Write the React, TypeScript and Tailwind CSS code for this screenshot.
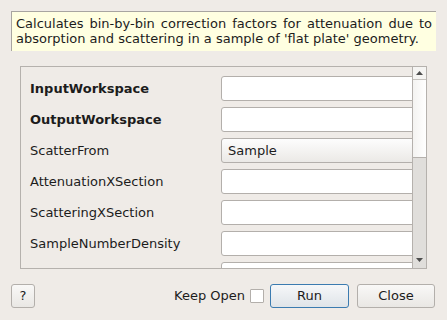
import React from 'react';

const rows: { label: string; bold?: boolean; kind: 'text' | 'combo'; value?: string }[] = [
  { label: 'InputWorkspace', bold: true, kind: 'text' },
  { label: 'OutputWorkspace', bold: true, kind: 'text' },
  { label: 'ScatterFrom', kind: 'combo', value: 'Sample' },
  { label: 'AttenuationXSection', kind: 'text' },
  { label: 'ScatteringXSection', kind: 'text' },
  { label: 'SampleNumberDensity', kind: 'text' },
  { label: '', kind: 'text' },
];

const ParamRow = ({ row }: { row: (typeof rows)[number] }) => (
  <div className="flex items-center h-[25px] shrink-0">
    <span className={`w-[191px] shrink-0 text-[13px] text-[#1c1c1c] ${row.bold ? 'font-bold' : ''}`}>
      {row.label}
    </span>
    {row.kind === 'combo' ? (
      <div className="w-[220px] h-[25px] shrink-0 rounded-[3px] border border-[#b3afab] bg-gradient-to-b from-[#fdfdfd] to-[#ebe9e6] flex items-center pl-[6px] text-[13px] text-[#1c1c1c]">
        {row.value}
      </div>
    ) : (
      <div className="w-[220px] h-[25px] shrink-0 rounded-[3px] border border-[#b3afab] bg-white" />
    )}
  </div>
);

export default function App() {
  return (
    <div
      className="w-[447px] h-[320px] bg-[#efebe7] flex flex-col overflow-hidden"
      style={{ fontFamily: '"DejaVu Sans", sans-serif' }}
    >
      {/* Description */}
      <div className="mt-[11px] ml-[11px] w-[425px] h-[40px] bg-[#ffffe1] border-t border-l border-[#a8a5a1] px-[4px] pt-[4px] text-[13px] leading-[15px] text-[#1c1c1c] text-justify [text-align-last:left]">
        Calculates bin-by-bin correction factors for attenuation due to absorption and scattering in a sample of 'flat plate' geometry.
      </div>

      {/* Parameter panel */}
      <div className="mt-[15px] ml-[20px] w-[407px] h-[203px] border border-[#b5b1ad] flex">
        <div className="flex-1 overflow-hidden flex flex-col gap-[6px] pt-[9px] pl-[9px]">
          {rows.map((r, i) => (
            <ParamRow key={i} row={r} />
          ))}
        </div>
        {/* Scrollbar */}
        <div className="w-[14px] shrink-0 border-l border-[#b5b1ad] flex flex-col">
          <div className="h-[13px] shrink-0 border-b border-[#c4c1bd] bg-[#f5f4f2] flex items-center justify-center">
            <svg width="7" height="4" viewBox="0 0 7 4"><path d="M0 4 L3.5 0 L7 4 Z" fill="#4d4d4d" /></svg>
          </div>
          <div className="h-[78px] shrink-0 border-b border-[#b5b1ad] bg-gradient-to-r from-[#f4f3f1] to-[#ffffff]" />
          <div className="flex-1 bg-[#e0dedb]" />
          <div className="h-[17px] shrink-0 bg-[#e0dedb] flex items-center justify-center">
            <svg width="7" height="4" viewBox="0 0 7 4"><path d="M0 0 L7 0 L3.5 4 Z" fill="#4d4d4d" /></svg>
          </div>
        </div>
      </div>

      {/* Bottom buttons */}
      <div className="mt-[15px] flex items-center pl-[11px] pr-[12px]">
        <button className="w-[24px] h-[24px] rounded-[3px] border border-[#b3afab] bg-gradient-to-b from-[#f9f8f7] to-[#e9e7e4] text-[13px] text-[#1c1c1c] flex items-center justify-center">
          ?
        </button>
        <div className="flex-1" />
        <span className="text-[13px] text-[#1c1c1c]">Keep Open</span>
        <div className="ml-[5px] w-[14px] h-[14px] border border-[#b3afab] bg-white rounded-[1px]" />
        <button className="ml-[6px] w-[79px] h-[24px] rounded-[3px] border border-[#3b7bb0] bg-gradient-to-b from-[#f6f7f9] to-[#dfe4e8] text-[13px] text-[#1c1c1c]">
          Run
        </button>
        <button className="ml-[8px] w-[78px] h-[24px] rounded-[3px] border border-[#b3afab] bg-gradient-to-b from-[#f9f8f7] to-[#e9e7e4] text-[13px] text-[#1c1c1c]">
          Close
        </button>
      </div>
    </div>
  );
}
